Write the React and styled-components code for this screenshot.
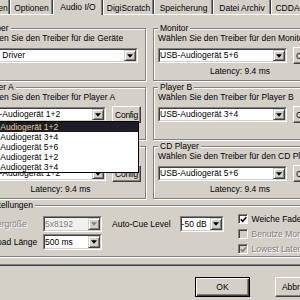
import styled, { createGlobalStyle, css } from 'styled-components';

const FACE = '#d4d0c8';
const SHADOW = '#808080';
const DARK = '#404040';
const LIGHT = '#ffffff';

const tabs = [
  { label: 'Anzeigen', width: 40 },
  { label: 'Optionen', width: 43 },
  { label: 'Audio I/O', width: 50, active: true },
  { label: 'DigiScratch', width: 51 },
  { label: 'Speicherung', width: 59 },
  { label: 'Datei Archiv', width: 58 },
  { label: 'CDDA-Player', width: 60 },
];

const playerAOptions = [
  'USB-Audiogerät 1+2',
  'USB-Audiogerät 3+4',
  'USB-Audiogerät 5+6',
  'USB-Audiogerät 1+2',
  'USB-Audiogerät 3+4',
];

const leftGroups = [
  { title: 'Treiber', hint: 'Wählen Sie den Treiber für die Geräte', device: 'Multi Driver' },
  { title: 'Player A', hint: 'Wählen Sie den Treiber für Player A', device: 'USB-Audiogerät 1+2', config: true, open: true },
  { title: 'Sampler', hint: 'Wählen Sie den Treiber für den Sampler', device: 'USB-Audiogerät 1+2', config: true, latency: true },
];

const rightGroups = [
  { title: 'Monitor', hint: 'Wählen Sie den Treiber für den Monitor', device: 'USB-Audiogerät 5+6', config: true, latency: true },
  { title: 'Player B', hint: 'Wählen Sie den Treiber für Player B', device: 'USB-Audiogerät 3+4', config: true },
  { title: 'CD Player', hint: 'Wählen Sie den Treiber für den CD Player', device: 'USB-Audiogerät 5+6', config: true, latency: true },
];

function App() {
  return (
    <Screen>
      <GlobalStyle />
      <Dialog>
        <TabStrip>
          {tabs.map((tab) => (
            <Tab key={tab.label} $width={tab.width} $active={tab.active}>
              {tab.label}
            </Tab>
          ))}
        </TabStrip>
        <Page>
          <Columns>
            <Column>
              {leftGroups.map((group) => (
                <DriverGroup key={group.title} {...group} />
              ))}
            </Column>
            <Column>
              {rightGroups.map((group) => (
                <DriverGroup key={group.title} {...group} />
              ))}
            </Column>
          </Columns>
          <Group $minHeight={0} $padBottom={0} $spaced>
            <Legend>Einstellungen</Legend>
            <SettingsRow>
              <SettingsGrid>
                <FieldLabel $disabled>Puffergröße</FieldLabel>
                <ComboBox value="5x8192" height={16} disabled />
                <FieldLabel>Preload Länge</FieldLabel>
                <ComboBox value="500 ms" height={16} />
              </SettingsGrid>
              <AutoCue>
                <FieldLabel>Auto-Cue Level</FieldLabel>
                <ComboBox value="-50 dB" height={16} width={44} />
              </AutoCue>
              <Checks>
                <Check label="Weiche Fader" checked />
                <Check label="Benutze Monitor" disabled />
                <Check label="Lowest Latency" checked disabled />
              </Checks>
            </SettingsRow>
          </Group>
        </Page>
        <ButtonRow>
          <PushButton $width={55} $height={20} $default>OK</PushButton>
          <PushButton $width={55} $height={20}>Abbrechen</PushButton>
        </ButtonRow>
      </Dialog>
    </Screen>
  );
}

function DriverGroup({ title, hint, device, config, latency, open }) {
  return (
    <Group>
      <Legend>{title}</Legend>
      <Hint>{hint}</Hint>
      <ControlRow $narrow={!config}>
        <ComboBox value={device}>
          {open && (
            <DropList>
              {playerAOptions.map((option, i) => (
                <DropItem key={i} $selected={i === 0}>
                  {option}
                </DropItem>
              ))}
            </DropList>
          )}
        </ComboBox>
        {config && (
          <PushButton $width={29} $height={17} $tight>
            Config
          </PushButton>
        )}
      </ControlRow>
      {latency && <Latency>Latency: 9.4 ms</Latency>}
    </Group>
  );
}

function ComboBox({ value, disabled, width, height = 15, children }) {
  return (
    <ComboFrame $width={width} $height={height}>
      <ComboField $disabled={disabled}>
        <ComboValue $disabled={disabled} $height={height}>
          {value}
        </ComboValue>
        <ArrowButton>
          <svg width="6" height="4" viewBox="0 0 7 4">
            <polygon points="0,0 7,0 3.5,4" fill={disabled ? SHADOW : '#000'} />
          </svg>
        </ArrowButton>
      </ComboField>
      {children}
    </ComboFrame>
  );
}

function Check({ label, checked, disabled }) {
  return (
    <CheckRow $disabled={disabled}>
      <CheckBox $disabled={disabled}>
        {checked && (
          <svg width="7" height="7" viewBox="0 0 7 7">
            <path
              d="M0.8 3.2 L2.7 5.2 L6.3 1.2"
              fill="none"
              stroke={disabled ? SHADOW : '#000'}
              strokeWidth="1.6"
            />
          </svg>
        )}
      </CheckBox>
      {label}
    </CheckRow>
  );
}

const GlobalStyle = createGlobalStyle`
  html, body {
    margin: 0;
    padding: 0;
    background: ${FACE};
  }
  body {
    font-family: "Liberation Sans", Arial, sans-serif;
    font-size: 8.5px;
    line-height: 10px;
    color: #000;
  }
`;

const Screen = styled.div`
  width: 300px;
  height: 300px;
  overflow: hidden;
  background: ${FACE};
`;

const Dialog = styled.div`
  width: 364px;
  margin: -3px 0 0 -31px;
`;

const TabStrip = styled.div`
  display: flex;
  align-items: flex-end;
  height: 17px;
  padding-left: 1px;
  position: relative;
  z-index: 1;
`;

const Tab = styled.div`
  flex: none;
  box-sizing: border-box;
  width: ${({ $width }) => $width}px;
  height: ${({ $active }) => ($active ? 18 : 16)}px;
  margin-bottom: ${({ $active }) => ($active ? -1 : 0)}px;
  padding-top: 4px;
  text-align: center;
  white-space: nowrap;
  overflow: hidden;
  background: ${FACE};
  border-top: 1px solid ${LIGHT};
  border-left: 1px solid ${LIGHT};
  border-right: 1px solid ${DARK};
  border-radius: 2px 2px 0 0;
  box-shadow: inset -1px 0 0 ${SHADOW};
`;

const Page = styled.div`
  border: 1px solid;
  border-color: ${LIGHT} ${DARK} ${DARK} ${LIGHT};
  box-shadow: inset -1px -1px 0 ${SHADOW};
  padding: 8px 5px 8px 5px;
`;

const Columns = styled.div`
  display: grid;
  grid-template-columns: 171px 1fr;
  column-gap: 7px;
`;

const Column = styled.div`
  display: flex;
  flex-direction: column;
  gap: 1px;
`;

const Group = styled.fieldset`
  margin: ${({ $spaced }) => ($spaced ? '1px 0 0' : 0)};
  min-width: 0;
  min-height: ${({ $minHeight }) => $minHeight ?? 58}px;
  box-sizing: border-box;
  padding: 0 4px ${({ $padBottom }) => $padBottom ?? 4}px;
  border: 1px solid ${SHADOW};
  box-shadow: 1px 1px 0 ${LIGHT}, inset 1px 1px 0 ${LIGHT};
`;

const Legend = styled.legend`
  margin: 0;
  padding: 0 2px;
  line-height: 10px;
  background: ${FACE};
`;

const Hint = styled.div`
  white-space: nowrap;
  line-height: 10px;
`;

const ControlRow = styled.div`
  display: flex;
  align-items: center;
  gap: 6px;
  height: 17px;
  margin-top: 4px;
  padding-right: ${({ $narrow }) => ($narrow ? 3 : 0)}px;
`;

const Latency = styled.div`
  margin-top: 2px;
  text-align: center;
  line-height: 10px;
`;

const ComboFrame = styled.div`
  position: relative;
  display: flex;
  box-sizing: border-box;
  flex: ${({ $width }) => ($width ? 'none' : '1 1 auto')};
  width: ${({ $width }) => ($width ? `${$width}px` : 'auto')};
  min-width: 0;
  height: ${({ $height }) => $height}px;
  border: 1px solid;
  border-color: ${SHADOW} ${LIGHT} ${LIGHT} ${SHADOW};
`;

const ComboField = styled.div`
  flex: 1;
  display: flex;
  min-width: 0;
  border: 1px solid;
  border-color: ${DARK} ${FACE} ${FACE} ${DARK};
  background: ${({ $disabled }) => ($disabled ? '#f1f0ed' : '#fff')};
`;

const ComboValue = styled.span`
  flex: 1;
  min-width: 0;
  line-height: ${({ $height }) => $height - 4}px;
  white-space: nowrap;
  overflow: hidden;
  color: ${({ $disabled }) => ($disabled ? SHADOW : '#000')};
`;

const ArrowButton = styled.span`
  flex: none;
  display: flex;
  align-items: center;
  justify-content: center;
  width: 12px;
  box-sizing: border-box;
  background: ${FACE};
  border: 1px solid;
  border-color: ${FACE} ${DARK} ${DARK} ${FACE};
  box-shadow: inset 1px 1px 0 ${LIGHT}, inset -1px -1px 0 ${SHADOW};
`;

const DropList = styled.ul`
  position: absolute;
  top: 100%;
  left: -1px;
  right: -34px;
  z-index: 5;
  margin: 0;
  padding: 0;
  list-style: none;
  background: #fff;
  border: 1px solid #000;
`;

const DropItem = styled.li`
  height: 10px;
  line-height: 10px;
  margin-left: -1px;
  white-space: nowrap;
  background: ${({ $selected }) => ($selected ? '#1d1d2a' : 'transparent')};
  color: ${({ $selected }) => ($selected ? '#e4d28c' : '#000')};
`;

const PushButton = styled.button`
  flex: none;
  display: flex;
  align-items: center;
  justify-content: center;
  box-sizing: border-box;
  width: ${({ $width }) => $width}px;
  height: ${({ $height }) => $height}px;
  margin: 0;
  padding: 0;
  font: inherit;
  letter-spacing: ${({ $tight }) => ($tight ? '-0.3px' : 'normal')};
  color: #000;
  background: ${FACE};
  border: 1px solid;
  border-color: ${LIGHT} ${DARK} ${DARK} ${LIGHT};
  box-shadow: inset -1px -1px 0 ${SHADOW};
  white-space: nowrap;
  overflow: visible;

  ${({ $default }) =>
    $default &&
    css`
      border-color: #000;
      box-shadow: inset 1px 1px 0 ${LIGHT}, inset -1px -1px 0 ${DARK},
        inset -2px -2px 0 ${SHADOW};
    `}
`;

const SettingsRow = styled.div`
  display: flex;
  align-items: flex-start;
  padding-left: 2px;
`;

const SettingsGrid = styled.div`
  display: grid;
  grid-template-columns: 61px 59px;
  grid-auto-rows: 16px;
  row-gap: 2px;
  margin-top: 6px;
`;

const FieldLabel = styled.span`
  line-height: 16px;
  white-space: nowrap;
  color: ${({ $disabled }) => ($disabled ? SHADOW : '#000')};
  text-shadow: ${({ $disabled }) => ($disabled ? `1px 1px 0 ${LIGHT}` : 'none')};
`;

const AutoCue = styled.div`
  display: flex;
  align-items: center;
  gap: 9px;
  height: 16px;
  margin: 6px 0 0 10px;
`;

const Checks = styled.div`
  display: flex;
  flex-direction: column;
  margin: 1px 0 0 14px;
`;

const CheckRow = styled.label`
  display: flex;
  align-items: center;
  gap: 4px;
  height: 15px;
  white-space: nowrap;
  color: ${({ $disabled }) => ($disabled ? SHADOW : '#000')};
  text-shadow: ${({ $disabled }) => ($disabled ? `1px 1px 0 ${LIGHT}` : 'none')};
`;

const CheckBox = styled.span`
  flex: none;
  display: flex;
  align-items: center;
  justify-content: center;
  width: 10px;
  height: 10px;
  box-sizing: border-box;
  padding: 1px 0 0 1px;
  border: 1px solid;
  border-color: ${SHADOW} ${LIGHT} ${LIGHT} ${SHADOW};
  box-shadow: inset 1px 1px 0 ${DARK};
  background: ${({ $disabled }) => ($disabled ? FACE : '#fff')};
`;

const ButtonRow = styled.div`
  display: flex;
  justify-content: flex-end;
  gap: 25px;
  margin-top: 11px;
  padding-right: 3px;
`;

export default App;
